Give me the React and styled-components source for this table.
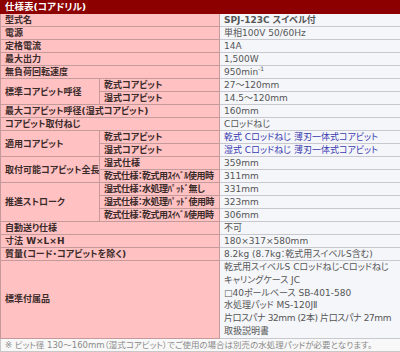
import styled, { createGlobalStyle } from "styled-components";

const GlobalStyle = createGlobalStyle`
  body {
    margin: 0;
    background: #ffffff;
  }
`;

const rows = [
  { label: "型式名", value: "SPJ-123C スイベル付", strong: true },
  { label: "電源", value: "単相100V 50/60Hz" },
  { label: "定格電流", value: "14A" },
  { label: "最大出力", value: "1,500W" },
  { label: "無負荷回転速度", value: <>950min<sup>-1</sup></> },
];

export default function App() {
  return (
    <>
      <GlobalStyle />
      <Spec>
        <colgroup>
          <Col $w={99} />
          <Col $w={120} />
          <Col $w={181} />
        </colgroup>
        <tbody>
          <tr>
            <Title colSpan={3}>仕様表(コアドリル)</Title>
          </tr>
          {rows.map((r) => (
            <tr key={r.label}>
              <Label colSpan={2}>{r.label}</Label>
              <Value $strong={r.strong}>{r.value}</Value>
            </tr>
          ))}
          <tr>
            <Label rowSpan={2}>標準コアビット呼径</Label>
            <Label>乾式コアビット</Label>
            <Value>27～120mm</Value>
          </tr>
          <tr>
            <Label>湿式コアビット</Label>
            <Value>14.5～120mm</Value>
          </tr>
          <tr>
            <Label colSpan={2}>最大コアビット呼径(湿式コアビット)</Label>
            <Value>160mm</Value>
          </tr>
          <tr>
            <Label colSpan={2}>コアビット取付ねじ</Label>
            <Value>Cロッドねじ</Value>
          </tr>
          <tr>
            <Label rowSpan={2}>適用コアビット</Label>
            <Label>乾式コアビット</Label>
            <Value $link>乾式 Cロッドねじ 薄刃一体式コアビット</Value>
          </tr>
          <tr>
            <Label>湿式コアビット</Label>
            <Value $link>湿式 Cロッドねじ 薄刃一体式コアビット</Value>
          </tr>
          <tr>
            <Label rowSpan={2}>取付可能コアビット全長</Label>
            <Label>湿式仕様</Label>
            <Value>359mm</Value>
          </tr>
          <tr>
            <Label $tight>乾式仕様：乾式用ｽｲﾍﾞﾙ使用時</Label>
            <Value>311mm</Value>
          </tr>
          <tr>
            <Label rowSpan={3}>推進ストローク</Label>
            <Label $tight>湿式仕様：水処理ﾊﾟｯﾄﾞ無し</Label>
            <Value>331mm</Value>
          </tr>
          <tr>
            <Label $tight>湿式仕様：水処理ﾊﾟｯﾄﾞ使用時</Label>
            <Value>323mm</Value>
          </tr>
          <tr>
            <Label $tight>乾式仕様：乾式用ｽｲﾍﾞﾙ使用時</Label>
            <Value>306mm</Value>
          </tr>
          <tr>
            <Label colSpan={2}>自動送り仕様</Label>
            <Value>不可</Value>
          </tr>
          <tr>
            <Label colSpan={2}>寸法 W×L×H</Label>
            <Value>180×317×580mm</Value>
          </tr>
          <tr>
            <Label colSpan={2}>質量(コード・コアビットを除く)</Label>
            <Value>8.2kg (8.7kg：乾式用スイベルS含む)</Value>
          </tr>
          <tr>
            <Label colSpan={2}>標準付属品</Label>
            <Value>
              <Line>乾式用スイベルS Cロッドねじ-Cロッドねじ</Line>
              <Line>キャリングケース JC</Line>
              <Line>□40ポールベース SB-401-580</Line>
              <Line>水処理パッド MS-120JⅡ</Line>
              <Line $tight>片口スパナ 32mm (2本) 片口スパナ 27mm</Line>
              <Line>取扱説明書</Line>
            </Value>
          </tr>
          <tr>
            <Note colSpan={3}>
              ※ ビット径 130～160mm（湿式コアビット）でご使用の場合は別売の水処理パッドが必要となります。
            </Note>
          </tr>
        </tbody>
      </Spec>
    </>
  );
}

const Spec = styled.table`
  width: 400px;
  border-collapse: collapse;
  table-layout: fixed;
  font-family: "DejaVu Sans", "Noto Sans CJK JP", sans-serif;
  font-size: 9px;
  font-feature-settings: "palt";
  line-height: 12px;

  td {
    height: 12px;
    padding: 0 4px;
    border: 1px solid #c49a9a;
    white-space: nowrap;
    overflow: hidden;
    vertical-align: middle;
  }
`;

const Col = styled.col`
  width: ${(p) => p.$w}px;
`;

const Title = styled.td`
  background: #8c0000;
  color: #ffffff;
  font-weight: bold;
  font-size: 9.5px;
  border-color: #8c0000 !important;
`;

const Label = styled.td`
  background: #ffc1c1;
  color: #3a2a2a;
  font-weight: bold;
  letter-spacing: ${(p) => (p.$tight ? "-0.5px" : "0")};
`;

const Value = styled.td`
  background: #f4f6fa;
  color: ${(p) => (p.$link ? "#3a3ab0" : "#555555")};
  font-weight: ${(p) => (p.$strong ? "bold" : "normal")};
  border-color: #c8c8d0 #c8c8d0 #c8c8d0 #c49a9a !important;

  sup {
    font-size: 6px;
    line-height: 0;
    vertical-align: 4px;
  }
`;

const Line = styled.div`
  height: 12.8px;
  line-height: 12.8px;
  letter-spacing: ${(p) => (p.$tight ? "-0.4px" : "0")};
`;

const Note = styled.td`
  background: #f8f8f8;
  color: #8a8a8a;
  font-size: 8.5px;
  border-color: #c8c8c8 !important;
`;
